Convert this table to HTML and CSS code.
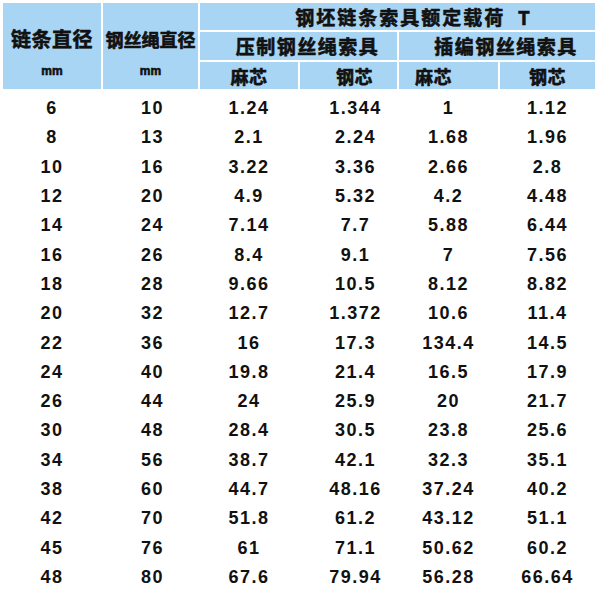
FILE: index.html
```html
<!DOCTYPE html>
<html lang="zh-CN">
<head>
<meta charset="utf-8">
<title>钢坯链条索具额定载荷</title>
<link rel="stylesheet" href="styles.css">
</head>
<body>
<table class="load-table">
  <colgroup>
    <col class="c1"><col class="c2"><col class="c3"><col class="c4"><col class="c5"><col class="c6">
  </colgroup>
  <thead>
    <tr class="hrow-1">
      <th rowspan="3" class="side side-chain"><div class="side-name">链条直径</div><div class="unit">mm</div></th>
      <th rowspan="3" class="side side-wire"><div class="side-name">钢丝绳直径</div><div class="unit">mm</div></th>
      <th colspan="4" class="title">钢坯链条索具额定载荷&nbsp;&nbsp;T</th>
    </tr>
    <tr class="hrow-2">
      <th colspan="2" class="group">压制钢丝绳索具</th>
      <th colspan="2" class="group">插编钢丝绳索具</th>
    </tr>
    <tr class="hrow-3">
      <th class="core">麻芯</th>
      <th class="core core-shift-r">钢芯</th>
      <th class="core core-shift-l">麻芯</th>
      <th class="core">钢芯</th>
    </tr>
  </thead>
  <tbody>
    <tr><td>6</td><td class="d2">10</td><td>1.24</td><td class="d4">1.344</td><td>1</td><td>1.12</td></tr>
    <tr><td>8</td><td class="d2">13</td><td>2.1</td><td class="d4">2.24</td><td>1.68</td><td>1.96</td></tr>
    <tr><td>10</td><td class="d2">16</td><td>3.22</td><td class="d4">3.36</td><td>2.66</td><td>2.8</td></tr>
    <tr><td>12</td><td class="d2">20</td><td>4.9</td><td class="d4">5.32</td><td>4.2</td><td>4.48</td></tr>
    <tr><td>14</td><td class="d2">24</td><td>7.14</td><td class="d4">7.7</td><td>5.88</td><td>6.44</td></tr>
    <tr><td>16</td><td class="d2">26</td><td>8.4</td><td class="d4">9.1</td><td>7</td><td>7.56</td></tr>
    <tr><td>18</td><td class="d2">28</td><td>9.66</td><td class="d4">10.5</td><td>8.12</td><td>8.82</td></tr>
    <tr><td>20</td><td class="d2">32</td><td>12.7</td><td class="d4">1.372</td><td>10.6</td><td>11.4</td></tr>
    <tr><td>22</td><td class="d2">36</td><td>16</td><td class="d4">17.3</td><td>134.4</td><td>14.5</td></tr>
    <tr><td>24</td><td class="d2">40</td><td>19.8</td><td class="d4">21.4</td><td>16.5</td><td>17.9</td></tr>
    <tr><td>26</td><td class="d2">44</td><td>24</td><td class="d4">25.9</td><td>20</td><td>21.7</td></tr>
    <tr><td>30</td><td class="d2">48</td><td>28.4</td><td class="d4">30.5</td><td>23.8</td><td>25.6</td></tr>
    <tr><td>34</td><td class="d2">56</td><td>38.7</td><td class="d4">42.1</td><td>32.3</td><td>35.1</td></tr>
    <tr><td>38</td><td class="d2">60</td><td>44.7</td><td class="d4">48.16</td><td>37.24</td><td>40.2</td></tr>
    <tr><td>42</td><td class="d2">70</td><td>51.8</td><td class="d4">61.2</td><td>43.12</td><td>51.1</td></tr>
    <tr><td>45</td><td class="d2">76</td><td>61</td><td class="d4">71.1</td><td>50.62</td><td>60.2</td></tr>
    <tr><td>48</td><td class="d2">80</td><td>67.6</td><td class="d4">79.94</td><td>56.28</td><td>66.64</td></tr>
  </tbody>
</table>
</body>
</html>
```

FILE: styles.css
```css
html, body {
  margin: 0;
  padding: 0;
  background: #ffffff;
}

body {
  padding: 1px;
  color: #111111;
}

.load-table {
  table-layout: fixed;
  width: 596px;
  border-collapse: separate;
  border-spacing: 2px;
  background: #ffffff;
}

.c1 { width: 98px; }
.c2 { width: 95px; }
.c3 { width: 98px; }
.c4 { width: 97px; }
.c5 { width: 99px; }
.c6 { width: 95px; }

.load-table th {
  background: #a8d5f4;
  padding: 0;
  font-family: "Noto Sans CJK SC", "Noto Sans", sans-serif;
  font-weight: 700;
  color: #111111;
  -webkit-text-stroke: 0.6px #111111;
  text-align: center;
  white-space: nowrap;
  overflow: hidden;
}

.hrow-1 { height: 27px; }
.hrow-2 { height: 28px; }
.hrow-3 { height: 27px; }

.side {
  vertical-align: top;
  padding-top: 23px !important;
}

.side-name {
  line-height: 26px;
}

.side-chain .side-name {
  font-size: 20px;
  letter-spacing: 0.5px;
}

.side-wire .side-name {
  font-size: 18px;
  letter-spacing: 0;
}

.unit {
  margin-top: 12px;
  font-family: "Liberation Sans", Arial, sans-serif;
  font-size: 12px;
  font-weight: 700;
  line-height: 14px;
}

.title {
  font-size: 19px;
  line-height: 24px;
  letter-spacing: 2px;
  padding-left: 32px !important;
}

.group {
  font-size: 19px;
  line-height: 26px;
  letter-spacing: 1.5px;
  padding-left: 18px !important;
}

.core {
  font-size: 18px;
  line-height: 24px;
  letter-spacing: 0.5px;
}

.core-shift-r {
  padding-left: 12px !important;
}

.core-shift-l {
  padding-right: 30px !important;
}

.load-table tbody tr {
  height: 27.3px;
}

.load-table td {
  padding: 7px 0 0 0;
  font-family: "Liberation Sans", Arial, sans-serif;
  font-size: 18px;
  font-weight: 700;
  letter-spacing: 1.5px;
  line-height: 20px;
  text-align: center;
  vertical-align: middle;
  color: #111111;
  white-space: nowrap;
}

.load-table td.d2 {
  padding-left: 4px;
}

.load-table td.d4 {
  padding-left: 14px;
}
```
